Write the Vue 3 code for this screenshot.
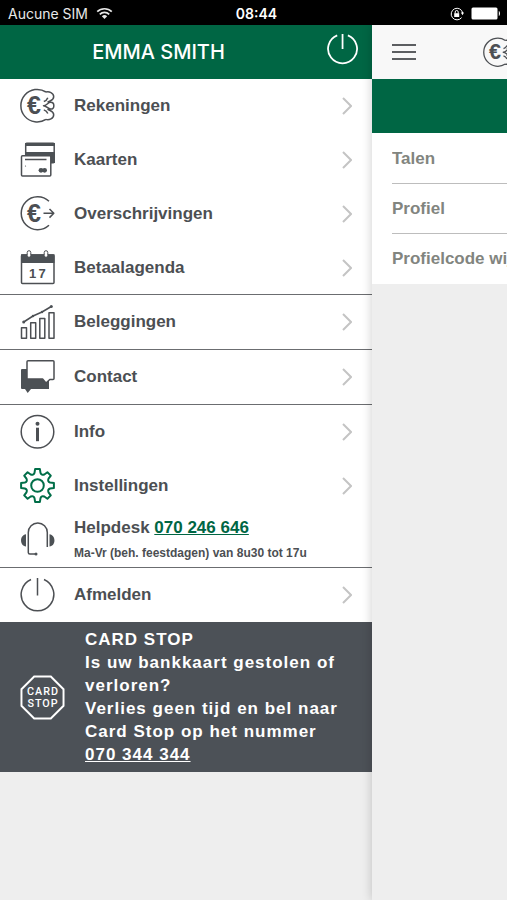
<script setup>
import { computed } from 'vue'

const groups = [
  [
    { id: 'accounts', label: 'Rekeningen' },
    { id: 'cards', label: 'Kaarten' },
    { id: 'transfers', label: 'Overschrijvingen' },
    { id: 'agenda', label: 'Betaalagenda' }
  ],
  [{ id: 'investments', label: 'Beleggingen' }],
  [{ id: 'contact', label: 'Contact' }],
  [
    { id: 'info', label: 'Info' },
    { id: 'settings', label: 'Instellingen', active: true },
    { id: 'helpdesk', label: 'Helpdesk' }
  ],
  [{ id: 'logout', label: 'Afmelden' }]
]

const settings = ['Talen', 'Profiel', 'Profielcode wijzigen']

// Coin outline and the three fingers that hold it
const coinPath =
  'M26 4A16.300 16.300 0 1 0 26 31.400' +
  'M26 4c3-.8 7.700.8 7.700 4.700 0 3.600-3.200 3.600-6.200 5.600M23.800 13.500c2.400-.7 3.400-2 4-3.700' +
  'M23.500 17.700c3.200 0 4.200-3.400 7.200-3.400 4.200 0 4.200 6.800 0 6.800-3 0-4-3.400-7.200-3.400z' +
  'M26 31.400c3 .8 7.700-.8 7.700-4.700 0-3.600-3.200-3.600-6.200-5.600M23.800 21.900c2.400.7 3.400 2 4 3.700'

// Outline of an eight-toothed cog centred on 17.5, 17.5
const gearPath = computed(() => {
  const c = 17.5
  const at = (deg, along, side) => {
    const a = (deg * Math.PI) / 180
    const x = c + along * Math.sin(a) + side * Math.cos(a)
    const y = c - along * Math.cos(a) + side * Math.sin(a)
    return `${x.toFixed(2)} ${y.toFixed(2)}`
  }
  let d = ''
  for (let deg = 0; deg < 360; deg += 45) {
    d += `${deg ? 'L' : 'M'}${at(deg, 12.6, -3)}L${at(deg, 16.4, -2.4)}`
    d += `L${at(deg, 16.4, 2.4)}L${at(deg, 12.6, 3)}`
    d += `Q${at(deg + 22.5, 10.6, 0)} ${at(deg + 45, 12.6, -3)}`
  }
  return d + 'Z'
})
</script>

<template>
  <div class="phone">
    <header class="status">
      <div class="carrier">
        <span>Aucune SIM</span>
        <svg class="wifi" viewBox="0 0 18 13" aria-hidden="true">
          <path d="M1.3 4.6a11 11 0 0 1 15.4 0M4 7.4a7.2 7.2 0 0 1 10 0" fill="none" stroke="currentColor" stroke-width="1.8" />
          <path d="M6.2 9.4a4 4 0 0 1 5.600 0L9 12.400z" fill="currentColor" />
        </svg>
      </div>
      <span class="clock">08:44</span>
      <div class="indicators">
        <svg class="lock" viewBox="0 0 14 14" aria-hidden="true">
          <path d="M11.600 10.600A5.800 5.800 0 1 1 12.700 6" fill="none" stroke="currentColor" stroke-width="1" />
          <path d="M10.800 5.600h3.200l-1.500 2.600z" fill="currentColor" />
          <rect x="4.200" y="6.200" width="5" height="3.800" fill="currentColor" />
          <path d="M5.200 6.400V5a1.500 1.500 0 0 1 3 0v1.400" fill="none" stroke="currentColor" stroke-width="1" />
        </svg>
        <svg class="battery" viewBox="0 0 30 13" aria-hidden="true">
          <rect x="0.500" y="0.500" width="26" height="12" rx="1.500" fill="currentColor" />
          <path d="M27.800 4v5c1.600-.5 1.600-4.500 0-5z" fill="currentColor" />
        </svg>
      </div>
    </header>

    <div class="stage">
      <aside class="drawer">
        <div class="user">
          <h1 class="name">EMMA SMITH</h1>
          <button class="power" type="button" aria-label="Afmelden">
            <svg viewBox="0 0 36 36" aria-hidden="true">
              <path d="M11.500 2.600A16.300 16.300 0 1 0 23.500 2.600M17.500 1v17" />
            </svg>
          </button>
        </div>

        <nav>
          <ul v-for="(group, g) in groups" :key="g" class="group">
            <li v-for="item in group" :key="item.id" class="row" :class="{ active: item.active }">
              <svg class="icon" viewBox="0 0 36 36" aria-hidden="true">
                <template v-if="item.id === 'accounts'">
                  <path :d="coinPath" />
                  <text x="7" y="26" class="euro">€</text>
                </template>
                <template v-else-if="item.id === 'cards'">
                  <rect x="5.700" y="1.200" width="28.500" height="19.500" rx="1" />
                  <path class="solid" d="M5 1h30v3H5zM5 10h30v11H31v-6H5z" />
                  <rect class="paper" x="1.500" y="13.700" width="29.300" height="20.300" rx="1" />
                  <path d="M5 17.500h21.500" />
                  <circle class="solid" cx="21" cy="28.300" r="2.400" />
                  <circle class="solid" cx="24.600" cy="28.300" r="2.400" />
                  <circle class="solid" cx="5.500" cy="24" r="0.600" />
                </template>
                <template v-else-if="item.id === 'transfers'">
                  <path d="M29 5.200A16.500 16.500 0 1 0 29 29.300" />
                  <path d="M23.500 17.300h10.200M29.500 13l4.300 4.300-4.300 4.300" />
                  <text x="7" y="26" class="euro">€</text>
                </template>
                <template v-else-if="item.id === 'agenda'">
                  <rect x="1.500" y="5" width="32.500" height="28.500" rx="1" />
                  <path class="solid" d="M1 4.300h33.500v8.700H1z" />
                  <rect class="ring" x="7.200" y="0.700" width="3.600" height="6.600" rx="1.800" />
                  <rect class="ring" x="24.200" y="0.700" width="3.600" height="6.600" rx="1.800" />
                  <text x="9" y="28" class="day">1</text>
                  <text x="18.500" y="28" class="day">7</text>
                </template>
                <template v-else-if="item.id === 'investments'">
                  <path d="M1.500 23.800h5v10.500h-5zM10.700 18.800h5v15.500h-5zM19.800 14.500h5v19.800h-5zM29 8.800h5v25.500h-5z" />
                  <path d="M3.700 18L13 12l9-4 9.300-5.500" />
                  <circle class="solid" cx="3.700" cy="18" r="1.500" />
                  <circle class="solid" cx="13" cy="12" r="1.200" />
                  <circle class="solid" cx="22" cy="8" r="1.200" />
                  <circle class="solid" cx="31.300" cy="2.500" r="1.500" />
                </template>
                <template v-else-if="item.id === 'contact'">
                  <path class="solid" d="M2 10h27v20H11l-3.300 4-2.700-4H2a1 1 0 0 1-1-1V11a1 1 0 0 1 1-1z" />
                  <path class="paper" d="M8 1.700h25a1 1 0 0 1 1 1V19.500a1 1 0 0 1-1 1h-3.200L26 24l-3.400-4H7V2.700a1 1 0 0 1 1-1z" />
                </template>
                <template v-else-if="item.id === 'info'">
                  <circle cx="17.500" cy="17.700" r="16.300" />
                  <circle class="solid" cx="17.500" cy="9.800" r="2" />
                  <path d="M17.500 13.700v13.500" stroke-width="3" />
                </template>
                <template v-else-if="item.id === 'settings'">
                  <path :d="gearPath" />
                  <circle cx="17.500" cy="17.500" r="6.300" />
                </template>
                <template v-else-if="item.id === 'helpdesk'">
                  <path d="M27.300 25V10.500a9.500 9.500 0 0 0-19 0V30.500a1.500 1.500 0 0 0 1.500 1.500H15" />
                  <circle class="solid" cx="16" cy="32" r="1.500" />
                  <path class="solid" d="M6 12.300v12.200c-6.600-1-6.600-11.200 0-12.200zM29.500 12.300v12.200c6.600-1 6.600-11.200 0-12.200z" />
                </template>
                <template v-else>
                  <path d="M11 2.500A16.300 16.300 0 1 0 24 2.500M17.500 1v17.500" />
                </template>
              </svg>

              <div v-if="item.id === 'helpdesk'" class="help">
                <p class="label">Helpdesk <a href="tel:070246646">070 246 646</a></p>
                <p class="hours">Ma-Vr (beh. feestdagen) van 8u30 tot 17u</p>
              </div>
              <a v-else class="label link" :href="'#' + item.id">
                <span>{{ item.label }}</span>
                <svg class="chevron" viewBox="0 0 10 18" aria-hidden="true">
                  <path d="M1 1l8 8-8 8" />
                </svg>
              </a>
            </li>
          </ul>
        </nav>

        <section class="stop">
          <svg class="sign" viewBox="0 0 46 46" aria-hidden="true">
            <path d="M14.500 1.500h17L44.500 14.500v17L31.500 44.500h-17L1.500 31.500v-17z" />
            <text x="23.500" y="20">CARD</text>
            <text x="23.500" y="33">STOP</text>
          </svg>
          <div>
            <h2>CARD STOP</h2>
            <p>Is uw bankkaart gestolen of verloren?</p>
            <p>Verlies geen tijd en bel naar Card Stop op het nummer</p>
            <p><a href="tel:070344344">070 344 344</a></p>
          </div>
        </section>
      </aside>

      <main class="peek">
        <div class="bar">
          <button class="burger" type="button" aria-label="Menu">
            <span></span><span></span><span></span>
          </button>
          <svg class="tab" viewBox="0 0 36 36" aria-hidden="true">
            <path :d="coinPath" />
            <text x="7" y="26" class="euro">€</text>
          </svg>
        </div>
        <div class="band"></div>
        <ul class="settings">
          <li v-for="name in settings" :key="name"><a href="#">{{ name }}</a></li>
        </ul>
      </main>
    </div>
  </div>
</template>

<style>
body {
  background: #eeeeee;
}
</style>

<style scoped>
.phone {
  display: flex;
  flex-direction: column;
  min-height: 100vh;
  overflow: hidden;
  color: #4c4f53;
  font-family: "Liberation Sans", Arial, sans-serif;
  font-weight: 700;
  font-size: 17px;
}
ul, p, h1, h2 {
  margin: 0;
  padding: 0;
  list-style: none;
  font-size: inherit;
}
button {
  padding: 0;
  border: 0;
  background: none;
  cursor: pointer;
}
svg {
  display: block;
  flex: none;
}

.status {
  position: relative;
  z-index: 2;
  display: grid;
  grid-template-columns: 1fr auto 1fr;
  align-items: center;
  height: 25px;
  padding: 2px 6px 0 8px;
  box-sizing: border-box;
  background: #000;
  color: #e8e8e8;
  font-family: Inter, sans-serif;
  font-size: 14px;
  font-weight: 400;
}
.carrier {
  display: flex;
  align-items: center;
  gap: 8px;
}
.wifi {
  width: 17px;
  height: 13px;
}
.clock {
  padding-left: 4px;
  font-weight: 600;
  color: #fff;
}
.indicators {
  display: flex;
  justify-content: flex-end;
  align-items: center;
  gap: 7px;
  color: #fff;
}
.lock {
  width: 14px;
  height: 14px;
}
.battery {
  width: 30px;
  height: 13px;
}

.stage {
  display: flex;
  flex: 1;
}
.drawer {
  flex: 1;
  min-width: 0;
}
.user {
  display: grid;
  grid-template-columns: 1fr auto;
  column-gap: 10px;
  align-items: center;
  height: 54px;
  padding-right: 13px;
  background: #006644;
  color: #fff;
}
.name {
  text-align: center;
  font-family: Inter, sans-serif;
  font-size: 20px;
  font-weight: 500;
}
.power {
  padding-bottom: 6px;
}
.power svg {
  width: 32px;
  height: 32px;
  fill: none;
  stroke: #fff;
  stroke-width: 2;
}

.group {
  background: #fff;
  border-bottom: 1px solid #6b6d70;
}
.group:last-child {
  border-bottom: 0;
}
.row {
  display: flex;
  align-items: center;
  gap: 18px;
  height: 54px;
  padding: 0 20px;
}
.group:first-child .row:last-child {
  height: 53px;
}
.icon, .tab {
  width: 36px;
  height: 36px;
  fill: none;
  stroke: #4c4f53;
  stroke-width: 1.5;
  stroke-linejoin: round;
}
.active .icon {
  stroke: #006e48;
  stroke-width: 2;
}
.solid {
  fill: #4c5155;
  stroke: none;
}
.paper {
  fill: #fff;
}
.ring {
  fill: #fff;
  stroke-width: 1;
}
.euro {
  fill: #4c4f53;
  stroke: none;
  font-size: 25px;
  font-weight: 700;
}
.day {
  fill: #4c4f53;
  stroke: none;
  font-size: 13px;
  font-weight: 700;
}
.label {
  color: inherit;
}
.link {
  display: flex;
  flex: 1;
  align-items: center;
  justify-content: space-between;
  text-decoration: none;
}
.chevron {
  width: 10px;
  height: 18px;
  fill: none;
  stroke: #c4c4c4;
  stroke-width: 2;
}
.help {
  display: grid;
  gap: 4px;
}
.help .label {
  line-height: 22px;
}
.help a {
  color: #006644;
}
.hours {
  font-size: 12px;
  line-height: 20px;
  white-space: nowrap;
}

.stop {
  display: flex;
  align-items: center;
  gap: 20px;
  padding: 6px 20px;
  background: #4c5157;
  color: #fff;
  line-height: 23px;
  letter-spacing: 1px;
}
.stop a {
  color: inherit;
}
.sign {
  width: 45px;
  height: 45px;
  fill: none;
  stroke: #fff;
  stroke-width: 2;
}
.sign text {
  fill: #fff;
  stroke: none;
  font-family: Roboto, sans-serif;
  font-size: 11px;
  font-weight: 500;
  text-anchor: middle;
}

.peek {
  position: relative;
  width: 135px;
  background: #eeeeee;
  box-shadow: 0 0 10px rgba(0, 0, 0, 0.2);
}
.bar {
  display: flex;
  align-items: center;
  gap: 67px;
  height: 54px;
  padding-left: 20px;
  overflow: hidden;
  background: #f8f8f8;
}
.burger {
  display: grid;
  flex: none;
  gap: 5px;
  width: 24px;
}
.burger span {
  height: 2px;
  background: #5c5e61;
}
.tab {
  width: 31px;
  height: 31px;
}
.band {
  height: 54px;
  background: #006644;
}
.settings {
  padding: 1px 0 0 20px;
  background: #fff;
  color: #82857f;
}
.settings li {
  overflow: hidden;
  line-height: 49px;
  white-space: nowrap;
  border-bottom: 1px solid #bdbdbd;
}
.settings li:last-child {
  border-bottom-color: #fff;
}
.settings a {
  color: inherit;
  text-decoration: none;
}
</style>
